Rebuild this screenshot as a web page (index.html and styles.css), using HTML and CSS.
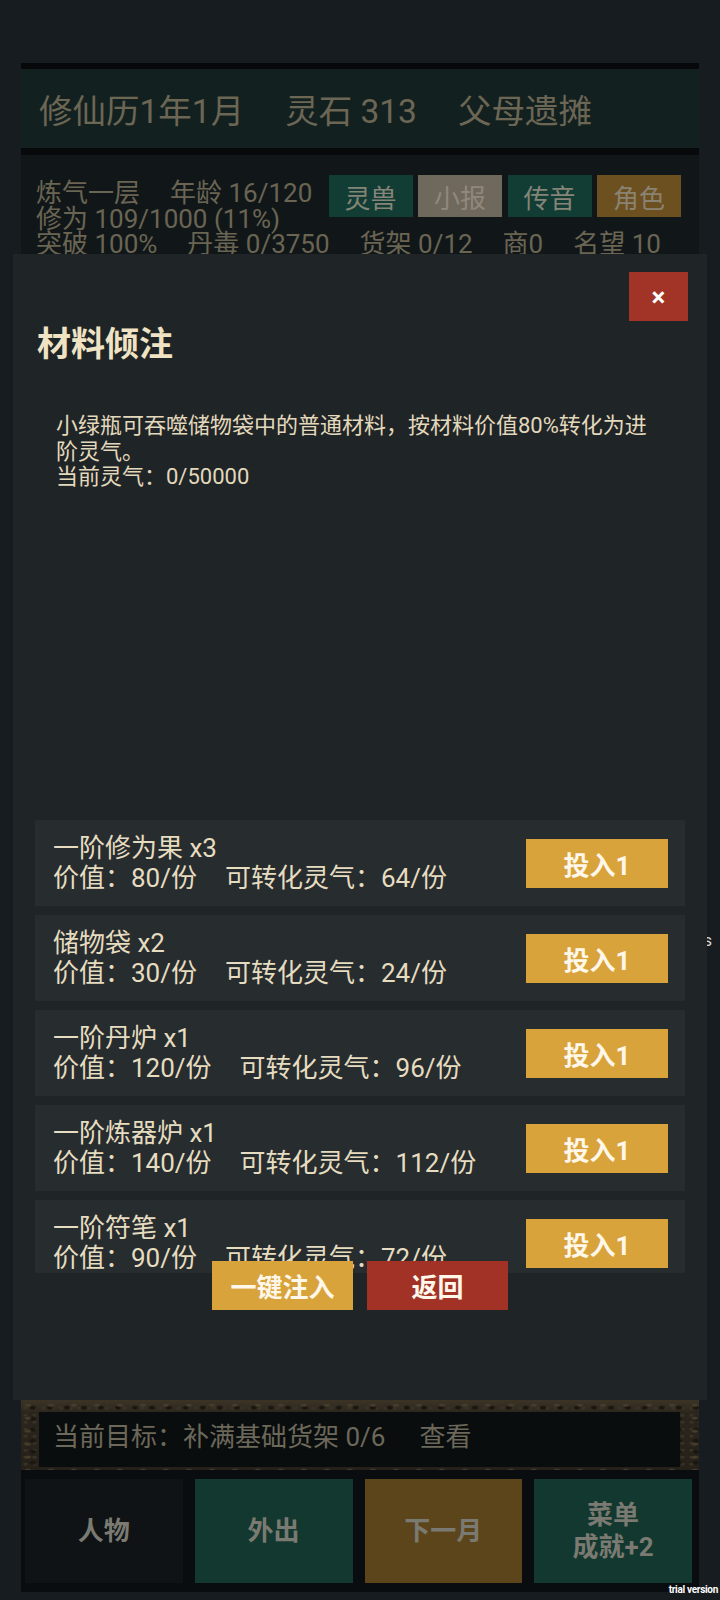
FILE: index.html
```html
<!DOCTYPE html>
<html>
<head>
    <meta charset="utf-8">
    <title>修仙历</title>
    <link rel="stylesheet" href="styles.css">
</head>
<body>
    <div class="app">
        <div class="topbar">
            <span>修仙历1年1月</span>
            <span>灵石 313</span>
            <span>父母遗摊</span>
        </div>

        <div class="status">
            <div class="status-top">
                <div class="status-text">
                    <div class="line"><span>炼气一层</span><span>年龄 16/120</span></div>
                    <div class="line"><span>修为 109/1000 (11%)</span></div>
                </div>
                <div class="tabs">
                    <button class="tab teal">灵兽</button>
                    <button class="tab grey">小报</button>
                    <button class="tab teal">传音</button>
                    <button class="tab brown">角色</button>
                </div>
            </div>
            <div class="line"><span>突破 100%</span><span>丹毒 0/3750</span><span>货架 0/12</span><span>商0</span><span>名望 10</span></div>
            <div class="stray">s</div>
        </div>

        <div class="goal">
            <div class="goal-inner">当前目标：补满基础货架 0/6<span class="goal-link">查看</span></div>
        </div>

        <div class="nav">
            <button class="nav-btn dark">人物</button>
            <button class="nav-btn teal">外出</button>
            <button class="nav-btn brown">下一月</button>
            <button class="nav-btn teal">菜单<br>成就+2</button>
        </div>
    </div>

    <div class="modal">
        <button class="close">×</button>
        <h2 class="modal-title">材料倾注</h2>
        <p class="modal-desc">小绿瓶可吞噬储物袋中的普通材料，按材料价值80%转化为进阶灵气。<br>当前灵气：0/50000</p>

        <div class="items">
            <div class="item">
                <div class="item-info">
                    <div>一阶修为果 x3</div>
                    <div><span>价值：80/份</span><span class="gain">可转化灵气：64/份</span></div>
                </div>
                <button class="btn gold">投入1</button>
            </div>
            <div class="item">
                <div class="item-info">
                    <div>储物袋 x2</div>
                    <div><span>价值：30/份</span><span class="gain">可转化灵气：24/份</span></div>
                </div>
                <button class="btn gold">投入1</button>
            </div>
            <div class="item">
                <div class="item-info">
                    <div>一阶丹炉 x1</div>
                    <div><span>价值：120/份</span><span class="gain">可转化灵气：96/份</span></div>
                </div>
                <button class="btn gold">投入1</button>
            </div>
            <div class="item">
                <div class="item-info">
                    <div>一阶炼器炉 x1</div>
                    <div><span>价值：140/份</span><span class="gain">可转化灵气：112/份</span></div>
                </div>
                <button class="btn gold">投入1</button>
            </div>
            <div class="item">
                <div class="item-info">
                    <div>一阶符笔 x1</div>
                    <div><span>价值：90/份</span><span class="gain">可转化灵气：72/份</span></div>
                </div>
                <button class="btn gold">投入1</button>
            </div>
        </div>

        <div class="actions">
            <button class="btn gold wide">一键注入</button>
            <button class="btn red wide">返回</button>
        </div>
    </div>

    <div class="watermark">trial version</div>
</body>
</html>
```

FILE: styles.css
```css
body {
    margin: 0;
    background: #161c1f;
    font-family: Roboto, "Noto Sans CJK SC", sans-serif;
}
button {
    font-family: inherit;
    border: none;
    padding: 0;
    cursor: pointer;
}
.app {
    width: 720px;
    height: 1600px;
    box-sizing: border-box;
    padding: 63px 21px 8px 21px;
    display: flex;
    flex-direction: column;
}
.topbar {
    height: 79px;
    border-top: 6px solid #060809;
    border-bottom: 7px solid #07090a;
    background: #132020;
    display: flex;
    align-items: center;
    gap: 41px;
    padding-left: 18px;
    font-size: 33.5px;
    color: #6c6654;
}
.status {
    flex: 1;
    background: #111719;
    padding: 20px 18px 0 15px;
    display: flex;
    flex-direction: column;
    font-size: 26px;
    line-height: 25.5px;
    color: #6a6553;
}
.status-top {
    display: flex;
    justify-content: space-between;
    align-items: flex-start;
}
.status-text {
    padding-top: 6px;
}
.line {
    display: flex;
    gap: 30px;
    white-space: nowrap;
}
.tabs {
    display: flex;
    gap: 5.5px;
}
.tab {
    width: 84px;
    height: 42px;
    font-size: 26px;
    color: #858478;
}
.tab.teal {
    background: #123d34;
}
.tab.grey {
    background: #6f685d;
    color: #8f887b;
}
.tab.brown {
    background: #6d5020;
    color: #8a8272;
}
.stray {
    margin-top: 670px;
    margin-right: -31px;
    text-align: right;
    font-size: 16px;
    color: #d8d8d8;
}
.goal {
    height: 70px;
    box-sizing: border-box;
    padding: 12px 19px 3px 18px;
    background-color: #2a251c;
    background-image:
        radial-gradient(ellipse at 30% 40%, #463c2b 0 2px, transparent 4px),
        radial-gradient(ellipse at 70% 70%, #1a1711 0 2px, transparent 4px),
        radial-gradient(circle at 50% 10%, #3a3225 0 1px, transparent 3px),
        linear-gradient(#3b3426, #2a251c 20%, #25211a);
    background-size: 23px 13px, 17px 11px, 9px 7px, 100% 100%;
}
.goal-inner {
    height: 55px;
    box-sizing: border-box;
    padding: 0 0 10px 14px;
    display: flex;
    align-items: center;
    background: #0a0d0e;
    font-size: 26px;
    color: #6c685a;
    white-space: nowrap;
}
.goal-link {
    margin-left: 34px;
}
.nav {
    height: 122px;
    box-sizing: border-box;
    padding: 9px 7px 9px 4px;
    background: #0a0d0f;
    display: grid;
    grid-template-columns: repeat(4, 1fr);
    gap: 12px;
}
.nav-btn {
    font-size: 26px;
    font-weight: bold;
    line-height: 32px;
    color: #7a7a72;
}
.nav-btn.dark {
    background: #0f1315;
}
.nav-btn.teal {
    background: #12382f;
}
.nav-btn.brown {
    background: #5c451a;
}

/* dialog */
.modal {
    position: absolute;
    left: 13px;
    top: 254px;
    width: 694px;
    height: 1146px;
    box-sizing: border-box;
    padding: 18px 22px 90px 22px;
    background: #1f2527;
    display: flex;
    flex-direction: column;
    color: #e6dcc0;
}
.close {
    align-self: flex-end;
    width: 59px;
    height: 49px;
    margin-right: -3px;
    background: #a13327;
    color: #fff;
    font-size: 26px;
    font-weight: bold;
}
.modal-title {
    margin: 3px 0 0 2px;
    font-size: 34px;
    line-height: 40px;
    font-weight: bold;
    color: #efe3c4;
}
.modal-desc {
    margin: 49px 0 0 0;
    padding: 0 21px;
    font-size: 22px;
    line-height: 25.5px;
    color: #e3d8bc;
}
.items {
    margin-top: auto;
    height: 453px;
    overflow: hidden;
    display: flex;
    flex-direction: column;
    gap: 9px;
}
.item {
    flex-shrink: 0;
    height: 86px;
    box-sizing: border-box;
    padding: 0 17px 0 18px;
    display: flex;
    align-items: center;
    justify-content: space-between;
    background: #272d2f;
}
.item-info {
    font-size: 26px;
    line-height: 30px;
    white-space: nowrap;
}
.gain {
    margin-left: 28px;
}
.btn {
    width: 142px;
    height: 49px;
    font-size: 26px;
    font-weight: bold;
    color: #fff8ea;
}
.btn.gold {
    background: #d9a33c;
}
.btn.red {
    background: #a23226;
}
.btn.wide {
    width: 141px;
}
.actions {
    position: relative;
    margin-top: -12px;
    display: flex;
    justify-content: center;
    gap: 14px;
}
.watermark {
    position: absolute;
    right: 2px;
    top: 1584px;
    font-size: 10px;
    font-weight: bold;
    color: #fff;
    letter-spacing: -0.3px;
}
```
